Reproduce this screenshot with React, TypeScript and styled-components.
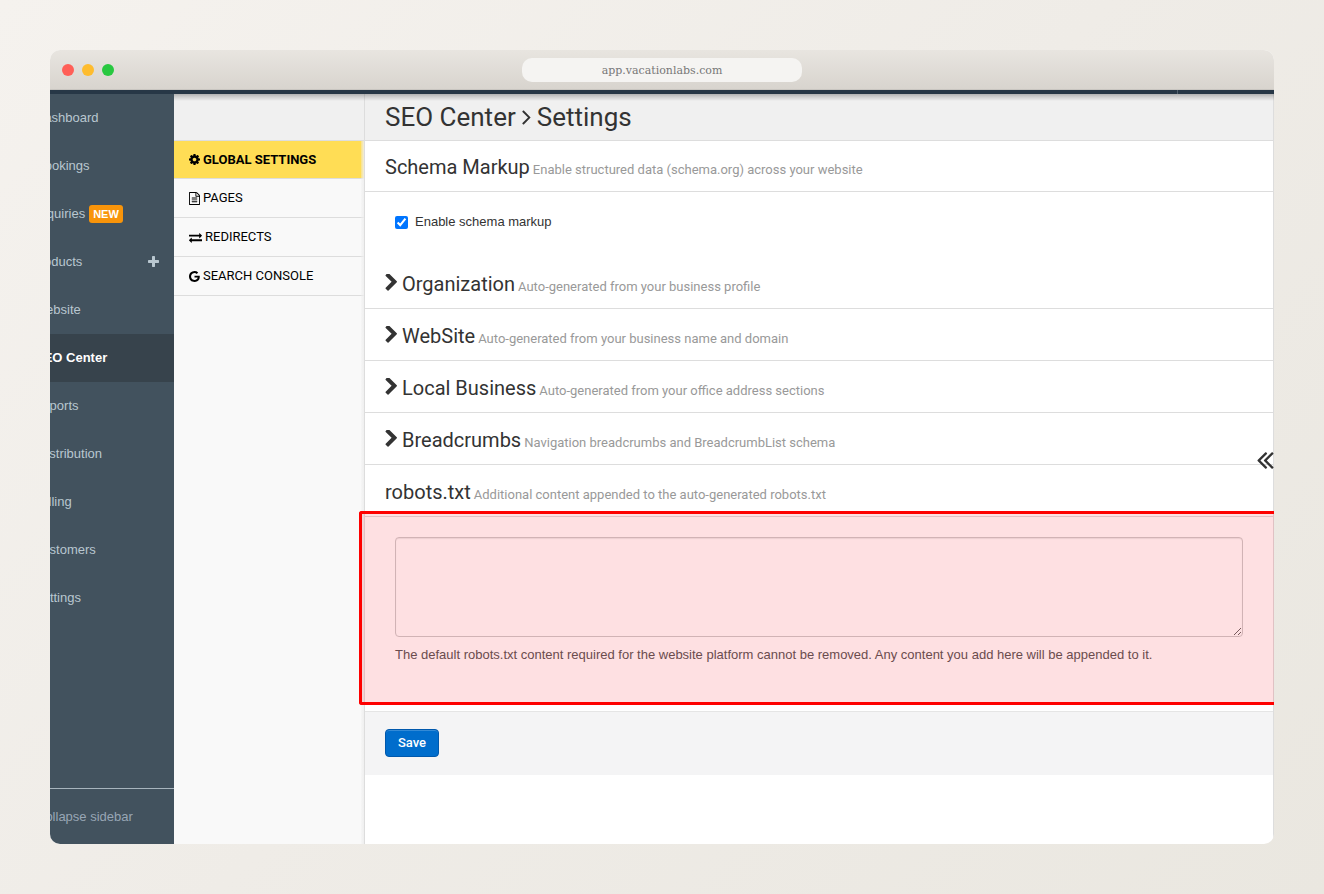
import React from "react";
import styled, { createGlobalStyle, css } from "styled-components";

const GlobalStyle = createGlobalStyle`
  *, *::before, *::after { box-sizing: border-box; }
  body {
    margin: 0;
    font-family: "Liberation Sans", Arial, sans-serif;
    font-size: 13px;
    line-height: 20px;
    color: #333;
  }
`;

const roboto = css`
  font-family: Roboto, "Liberation Sans", sans-serif;
`;

const Page = styled.div`
  display: flex;
  min-height: 100vh;
  padding: 50px;
  background: linear-gradient(135deg, #f5f2ee 0%, #efece7 50%, #eae7e0 100%);
`;

const BrowserWindow = styled.div`
  display: flex;
  flex: 1;
  flex-direction: column;
  min-width: 0;
  overflow: hidden;
  border-radius: 10px;
  background: #fff;
`;

const TitleBar = styled.header`
  display: grid;
  grid-template-columns: 1fr 280px 1fr;
  align-items: center;
  height: 40px;
  padding: 0 12px;
  background: linear-gradient(#e8e5e0, #d8d4ce);
  border-bottom: 1px solid #c8c5c0;
`;

const Lights = styled.div`
  display: flex;
  gap: 8px;
`;

const Light = styled.span<{ $color: string }>`
  width: 12px;
  height: 12px;
  border-radius: 50%;
  background: ${(p) => p.$color};
`;

const Address = styled.div`
  height: 24px;
  padding-top: 1px;
  border-radius: 10px;
  background: #f5f4f2;
  color: #777;
  font-family: "DejaVu Serif", serif;
  font-size: 11px;
  line-height: 24px;
  text-align: center;
`;

const TopStrip = styled.div`
  display: flex;
  justify-content: flex-end;
  height: 4px;
  padding-right: 96px;
  background: #273746;
`;

const StripDivider = styled.span`
  width: 1px;
  background: #52616e;
`;

const Body = styled.div`
  display: flex;
  flex: 1;
  min-height: 0;
`;

const Sidebar = styled.aside`
  display: flex;
  flex: 0 0 124px;
  justify-content: flex-end;
  overflow: hidden;
  background: #42525e;
`;

const SidebarInner = styled.div`
  display: flex;
  flex: 0 0 186px;
  flex-direction: column;
  justify-content: space-between;
`;

const NavLink = styled.a<{ $active?: boolean }>`
  display: flex;
  align-items: center;
  height: 48px;
  padding: 0 15px 0 29px;
  color: ${(p) => (p.$active ? "#fff" : "#b9c7d0")};
  background: ${(p) => (p.$active ? "#37434c" : "transparent")};
  font-weight: ${(p) => (p.$active ? 700 : 400)};
  text-decoration: none;
`;

const IconSlot = styled.span<{ $width: number }>`
  flex: 0 0 ${(p) => p.$width}px;
`;

const NewBadge = styled.span`
  margin-left: 4px;
  padding: 0 4px;
  border-radius: 3px;
  background: #f8940a;
  color: #fff;
  font-size: 11px;
  font-weight: 700;
  line-height: 18px;
`;

const PushRight = styled.span`
  display: flex;
  margin-left: auto;
  padding-bottom: 1px;
`;

const CollapseButton = styled.button`
  height: 56px;
  padding: 0 0 0 48px;
  border: 0;
  border-top: 1px solid #a7b4bd;
  background: none;
  color: #98a6b5;
  font: inherit;
  text-align: left;
`;

const Workspace = styled.div`
  display: flex;
  flex: 1;
  min-width: 0;
  position: relative;

  &::before {
    content: "";
    position: absolute;
    z-index: 2;
    inset: 0 0 auto 0;
    height: 7px;
    background: linear-gradient(rgba(0, 0, 0, 0.26), rgba(0, 0, 0, 0.14) 40%, rgba(0, 0, 0, 0));
  }
`;

const SubNav = styled.nav`
  ${roboto}
  position: relative;
  flex: 0 0 190px;
  padding-top: 46px;
  background: linear-gradient(#f0f0f0 46px, #f9f9f9 46px);

  &::after {
    content: "";
    position: absolute;
    inset: 47px 0 0 auto;
    width: 3px;
    background: linear-gradient(90deg, rgba(238, 238, 238, 0.3), rgba(238, 238, 238, 0.9));
  }
`;

const SubNavLink = styled.a<{ $active?: boolean }>`
  display: flex;
  align-items: center;
  gap: 3px;
  height: 39px;
  padding: 0 15px;
  border-bottom: 1px solid #ddd;
  background: ${(p) => (p.$active ? "#ffdd55" : "transparent")};
  color: #000;
  font-weight: ${(p) => (p.$active ? 700 : 400)};
  text-decoration: none;

  &:first-child {
    border-top: 1px solid #ddd;
  }
`;

const Main = styled.main`
  flex: 1;
  min-width: 0;
  position: relative;
  border: solid #ddd;
  border-width: 0 1px;
`;

const PageHeader = styled.div`
  height: 47px;
  padding: 0 20px;
  background: #f0f0f0;
  border-bottom: 1px solid #ddd;
`;

const PageTitle = styled.h1`
  ${roboto}
  display: flex;
  align-items: center;
  gap: 6px;
  margin: 0;
  font-size: 26px;
  font-weight: 400;
  line-height: 46px;
`;

const SectionTitle = styled.h2<{ $tall?: boolean }>`
  ${roboto}
  display: flex;
  align-items: baseline;
  gap: 3px;
  height: ${(p) => (p.$tall ? 52 : 51)}px;
  margin: 0;
  padding: 0 20px;
  border-bottom: 1px solid #ddd;
  font-size: 20px;
  font-weight: 400;
  line-height: ${(p) => (p.$tall ? 54 : 52)}px;
`;

const Hint = styled.small`
  color: #999;
  font-size: 13px;
`;

const ToggleButton = styled.button`
  display: flex;
  align-items: baseline;
  gap: 5px;
  padding: 0;
  border: 0;
  background: none;
  color: inherit;
  font: inherit;
`;

const SchemaBody = styled.div`
  height: 65px;
  padding: 20px 30px;
`;

const CheckLabel = styled.label`
  display: flex;
  align-items: center;
  gap: 7px;
`;

const Checkbox = styled.input`
  width: 13px;
  height: 13px;
  margin: 0;
  accent-color: #0075ff;
`;

const RobotsBody = styled.div`
  position: relative;
  padding: 20px 30px 46px;
`;

const RobotsInput = styled.textarea`
  display: block;
  width: 100%;
  height: 100px;
  margin-bottom: 8px;
  border: 1px solid #ccc;
  border-radius: 4px;
  background: #fff;
  box-shadow: inset 0 1px 1px rgba(0, 0, 0, 0.08);
  resize: vertical;
`;

const HelpText = styled.p`
  margin: 0;
  color: #555;
`;

const Highlight = styled.div`
  position: absolute;
  z-index: 1;
  inset: -6px -1px 6px -6px;
  border: 3px solid #fe0000;
  border-right: 0;
  border-radius: 3px 0 0 3px;
  background: rgba(250, 15, 30, 0.13);
  pointer-events: none;
`;

const Actions = styled.div`
  padding: 17px 20px 18px;
  border-top: 1px solid #e5e5e5;
  background: #f4f4f5;
`;

const SaveButton = styled.button`
  ${roboto}
  display: block;
  width: 54px;
  height: 28px;
  padding: 0 0 1px;
  border: 1px solid #0058ac;
  border-radius: 4px;
  background: #006dcc;
  box-shadow: inset 0 1px 0 rgba(255, 255, 255, 0.2);
  color: #fff;
  font-size: 13px;
  font-weight: 500;
`;

const DrawerButton = styled.button`
  display: flex;
  position: absolute;
  top: 358px;
  right: -1px;
  padding: 0;
  border: 0;
  background: none;
  color: #333;
`;

type GlyphProps = { box: string; w: number; h: number; d: string };

const Glyph = ({ box, w, h, d }: GlyphProps) => (
  <svg viewBox={box} width={w} height={h} fill="currentColor" aria-hidden="true">
    <path d={d} />
  </svg>
);

const Cog = () => (
  <Glyph
    box="128 128 1536 1536"
    w={11}
    h={11}
    d="M1152 896q0-106-75-181t-181-75-181 75-75 181 75 181 181 75 181-75 75-181zm512-109v222q0 12-8 23t-20 13l-185 28q-19 54-39 91 35 50 107 138 10 12 10 25t-9 23q-27 37-99 108t-94 71q-12 0-26-9l-138-108q-44 23-91 38-16 136-29 186-7 28-36 28h-222q-14 0-24.5-8.5t-11.5-21.5l-28-184q-49-16-90-37l-141 107q-10 9-25 9-14 0-25-11-126-114-165-168-7-10-7-23 0-12 8-23 15-21 51-66.5t54-70.5q-27-50-41-99l-183-27q-13-2-21-12.5t-8-23.5v-222q0-12 8-23t19-13l186-28q14-46 39-92-40-57-107-138-10-12-10-24 0-10 9-23 26-36 98.5-107.5t94.5-71.5q13 0 26 10l138 107q44-23 91-38 16-136 29-186 7-28 36-28h222q14 0 24.5 8.5t11.5 21.5l28 184q49 16 90 37l142-107q9-9 24-9 13 0 25 10 129 119 165 170 7 8 7 22 0 12-8 23-15 21-51 66.5t-54 70.5q26 50 41 98l183 28q13 2 21 12.5t8 23.5z"
  />
);

const FileText = () => (
  <Glyph
    box="128 0 1536 1792"
    w={11}
    h={13}
    d="M1596 380q28 28 48 76t20 88v1152q0 40-28 68t-68 28h-1344q-40 0-68-28t-28-68v-1600q0-40 28-68t68-28h896q40 0 88 20t76 48zm-444-244v376h376q-10-29-22-41l-313-313q-12-12-41-22zm384 1528v-1024h-416q-40 0-68-28t-28-68v-416h-768v1536h1280zm-1024-864q0-14 9-23t23-9h704q14 0 23 9t9 23v64q0 14-9 23t-23 9h-704q-14 0-23-9t-9-23v-64zm736 224q14 0 23 9t9 23v64q0 14-9 23t-23 9h-704q-14 0-23-9t-9-23v-64q0-14 9-23t23-9h704zm0 256q14 0 23 9t9 23v64q0 14-9 23t-23 9h-704q-14 0-23-9t-9-23v-64q0-14 9-23t23-9h704z"
  />
);

const Exchange = () => (
  <Glyph
    box="0 0 1792 1792"
    w={13}
    h={13}
    d="M1792 1184v192q0 13-9.5 22.5t-22.5 9.5h-1376v192q0 13-9.5 22.5t-22.5 9.5q-12 0-24-10l-319-320q-9-9-9-22 0-14 9-23l320-320q9-9 23-9 13 0 22.5 9.5t9.5 22.5v192h1376q13 0 22.5 9.5t9.5 22.5zm0-544q0 14-9 23l-320 320q-9 9-23 9-13 0-22.5-9.5t-9.5-22.5v-192h-1376q-13 0-22.5-9.5t-9.5-22.5v-192q0-13 9.5-22.5t22.5-9.5h1376v-192q0-14 9-23t23-9q12 0 24 10l319 319q9 9 9 23z"
  />
);

const Google = () => (
  <Glyph
    box="128 128 1536 1536"
    w={11}
    h={11}
    d="M896 786h725q12 67 12 128 0 217-91 387.5t-259.5 266.5-386.5 96q-157 0-299-60.5t-245-163.5-163.5-245-60.5-299 60.5-299 163.5-245 245-163.5 299-60.5q300 0 515 201l-209 201q-123-119-306-119-129 0-238.5 65t-173.5 176.5-64 243.5 64 243.5 173.5 176.5 238.5 65q87 0 160-24t120-60 82-82 51.5-87 22.5-78h-436v-264z"
  />
);

const ChevronRight = () => (
  <Glyph
    box="302 128 1080 1530"
    w={12}
    h={17}
    d="M1363 877l-742 742q-19 19-45 19t-45-19l-166-166q-19-19-19-45t19-45l531-531-531-531q-19-19-19-45t19-45l166-166q19-19 45-19t45 19l742 742q19 19 19 45t-19 45z"
  />
);

const AngleRight = () => (
  <Glyph
    box="575 430 620 1060"
    w={9}
    h={15}
    d="M1171 960q0 13-10 23l-466 466q-10 10-23 10t-23-10l-50-50q-10-10-10-23t10-23l393-393-393-393q-10-10-10-23t10-23l50-50q10-10 23-10t23 10l466 466q10 10 10 23z"
  />
);

const AngleDoubleLeft = () => (
  <Glyph
    box="410 450 1005 1020"
    w={17}
    h={17}
    d="M1011 1376q0 13-10 23l-50 50q-10 10-23 10t-23-10l-466-466q-10-10-10-23t10-23l466-466q10-10 23-10t23 10l50 50q10 10 10 23t-10 23l-393 393 393 393q10 10 10 23zm384 0q0 13-10 23l-50 50q-10 10-23 10t-23-10l-466-466q-10-10-10-23t10-23l466-466q10-10 23-10t23 10l50 50q10 10 10 23t-10 23l-393 393 393 393q10 10 10 23z"
  />
);

const Plus = () => (
  <Glyph
    box="192 128 1408 1408"
    w={11}
    h={11}
    d="M1600 736v192q0 40-28 68t-68 28h-416v416q0 40-28 68t-68 28h-192q-40 0-68-28t-28-68v-416h-416q-40 0-68-28t-28-68v-192q0-40 28-68t68-28h416v-416q0-40 28-68t68-28h192q40 0 68 28t28 68v416h416q40 0 68 28t28 68z"
  />
);

type NavItem = { label: string; slot: number; active?: boolean; isNew?: boolean; expandable?: boolean };

const navItems: NavItem[] = [
  { label: "Dashboard", slot: 18 },
  { label: "Bookings", slot: 19 },
  { label: "Inquiries", slot: 19, isNew: true },
  { label: "Products", slot: 14, expandable: true },
  { label: "Website", slot: 17 },
  { label: "SEO Center", slot: 18, active: true },
  { label: "Reports", slot: 16 },
  { label: "Distribution", slot: 20 },
  { label: "Billing", slot: 20 },
  { label: "Customers", slot: 16 },
  { label: "Settings", slot: 17 },
];

const subNavItems = [
  { label: "GLOBAL SETTINGS", Icon: Cog, active: true },
  { label: "PAGES", Icon: FileText },
  { label: "REDIRECTS", Icon: Exchange },
  { label: "SEARCH CONSOLE", Icon: Google },
];

const schemaSections = [
  { title: "Organization", hint: "Auto-generated from your business profile" },
  { title: "WebSite", hint: "Auto-generated from your business name and domain" },
  { title: "Local Business", hint: "Auto-generated from your office address sections" },
  { title: "Breadcrumbs", hint: "Navigation breadcrumbs and BreadcrumbList schema" },
];

export default function App() {
  return (
    <>
      <GlobalStyle />
      <Page>
        <BrowserWindow>
          <TitleBar>
            <Lights>
              <Light $color="#ff5f57" />
              <Light $color="#febc2e" />
              <Light $color="#28c840" />
            </Lights>
            <Address>app.vacationlabs.com</Address>
          </TitleBar>
          <TopStrip>
            <StripDivider />
          </TopStrip>
          <Body>
            <Sidebar>
              <SidebarInner>
                <nav>
                  {navItems.map((item) => (
                    <NavLink key={item.label} href="#" $active={item.active}>
                      <IconSlot $width={item.slot} />
                      {item.label}
                      {item.isNew && <NewBadge>NEW</NewBadge>}
                      {item.expandable && (
                        <PushRight>
                          <Plus />
                        </PushRight>
                      )}
                    </NavLink>
                  ))}
                </nav>
                <CollapseButton type="button">Collapse sidebar</CollapseButton>
              </SidebarInner>
            </Sidebar>
            <Workspace>
              <SubNav>
                {subNavItems.map(({ label, Icon, active }) => (
                  <SubNavLink key={label} href="#" $active={active}>
                    <Icon />
                    {label}
                  </SubNavLink>
                ))}
              </SubNav>
              <Main>
                <PageHeader>
                  <PageTitle>
                    SEO Center <AngleRight /> Settings
                  </PageTitle>
                </PageHeader>
                <SectionTitle>
                  Schema Markup
                  <Hint>Enable structured data (schema.org) across your website</Hint>
                </SectionTitle>
                <SchemaBody>
                  <CheckLabel>
                    <Checkbox type="checkbox" defaultChecked />
                    Enable schema markup
                  </CheckLabel>
                </SchemaBody>
                {schemaSections.map(({ title, hint }) => (
                  <SectionTitle key={title} $tall>
                    <ToggleButton type="button" aria-expanded="false">
                      <ChevronRight />
                      {title}
                    </ToggleButton>
                    <Hint>{hint}</Hint>
                  </SectionTitle>
                ))}
                <SectionTitle $tall>
                  <label htmlFor="robots">robots.txt</label>
                  <Hint>Additional content appended to the auto-generated robots.txt</Hint>
                </SectionTitle>
                <RobotsBody>
                  <RobotsInput id="robots" />
                  <HelpText>
                    The default robots.txt content required for the website platform cannot be removed. Any content you
                    add here will be appended to it.
                  </HelpText>
                  <Highlight />
                </RobotsBody>
                <Actions>
                  <SaveButton type="button">Save</SaveButton>
                </Actions>
                <DrawerButton type="button" aria-label="Open panel">
                  <AngleDoubleLeft />
                </DrawerButton>
              </Main>
            </Workspace>
          </Body>
        </BrowserWindow>
      </Page>
    </>
  );
}
